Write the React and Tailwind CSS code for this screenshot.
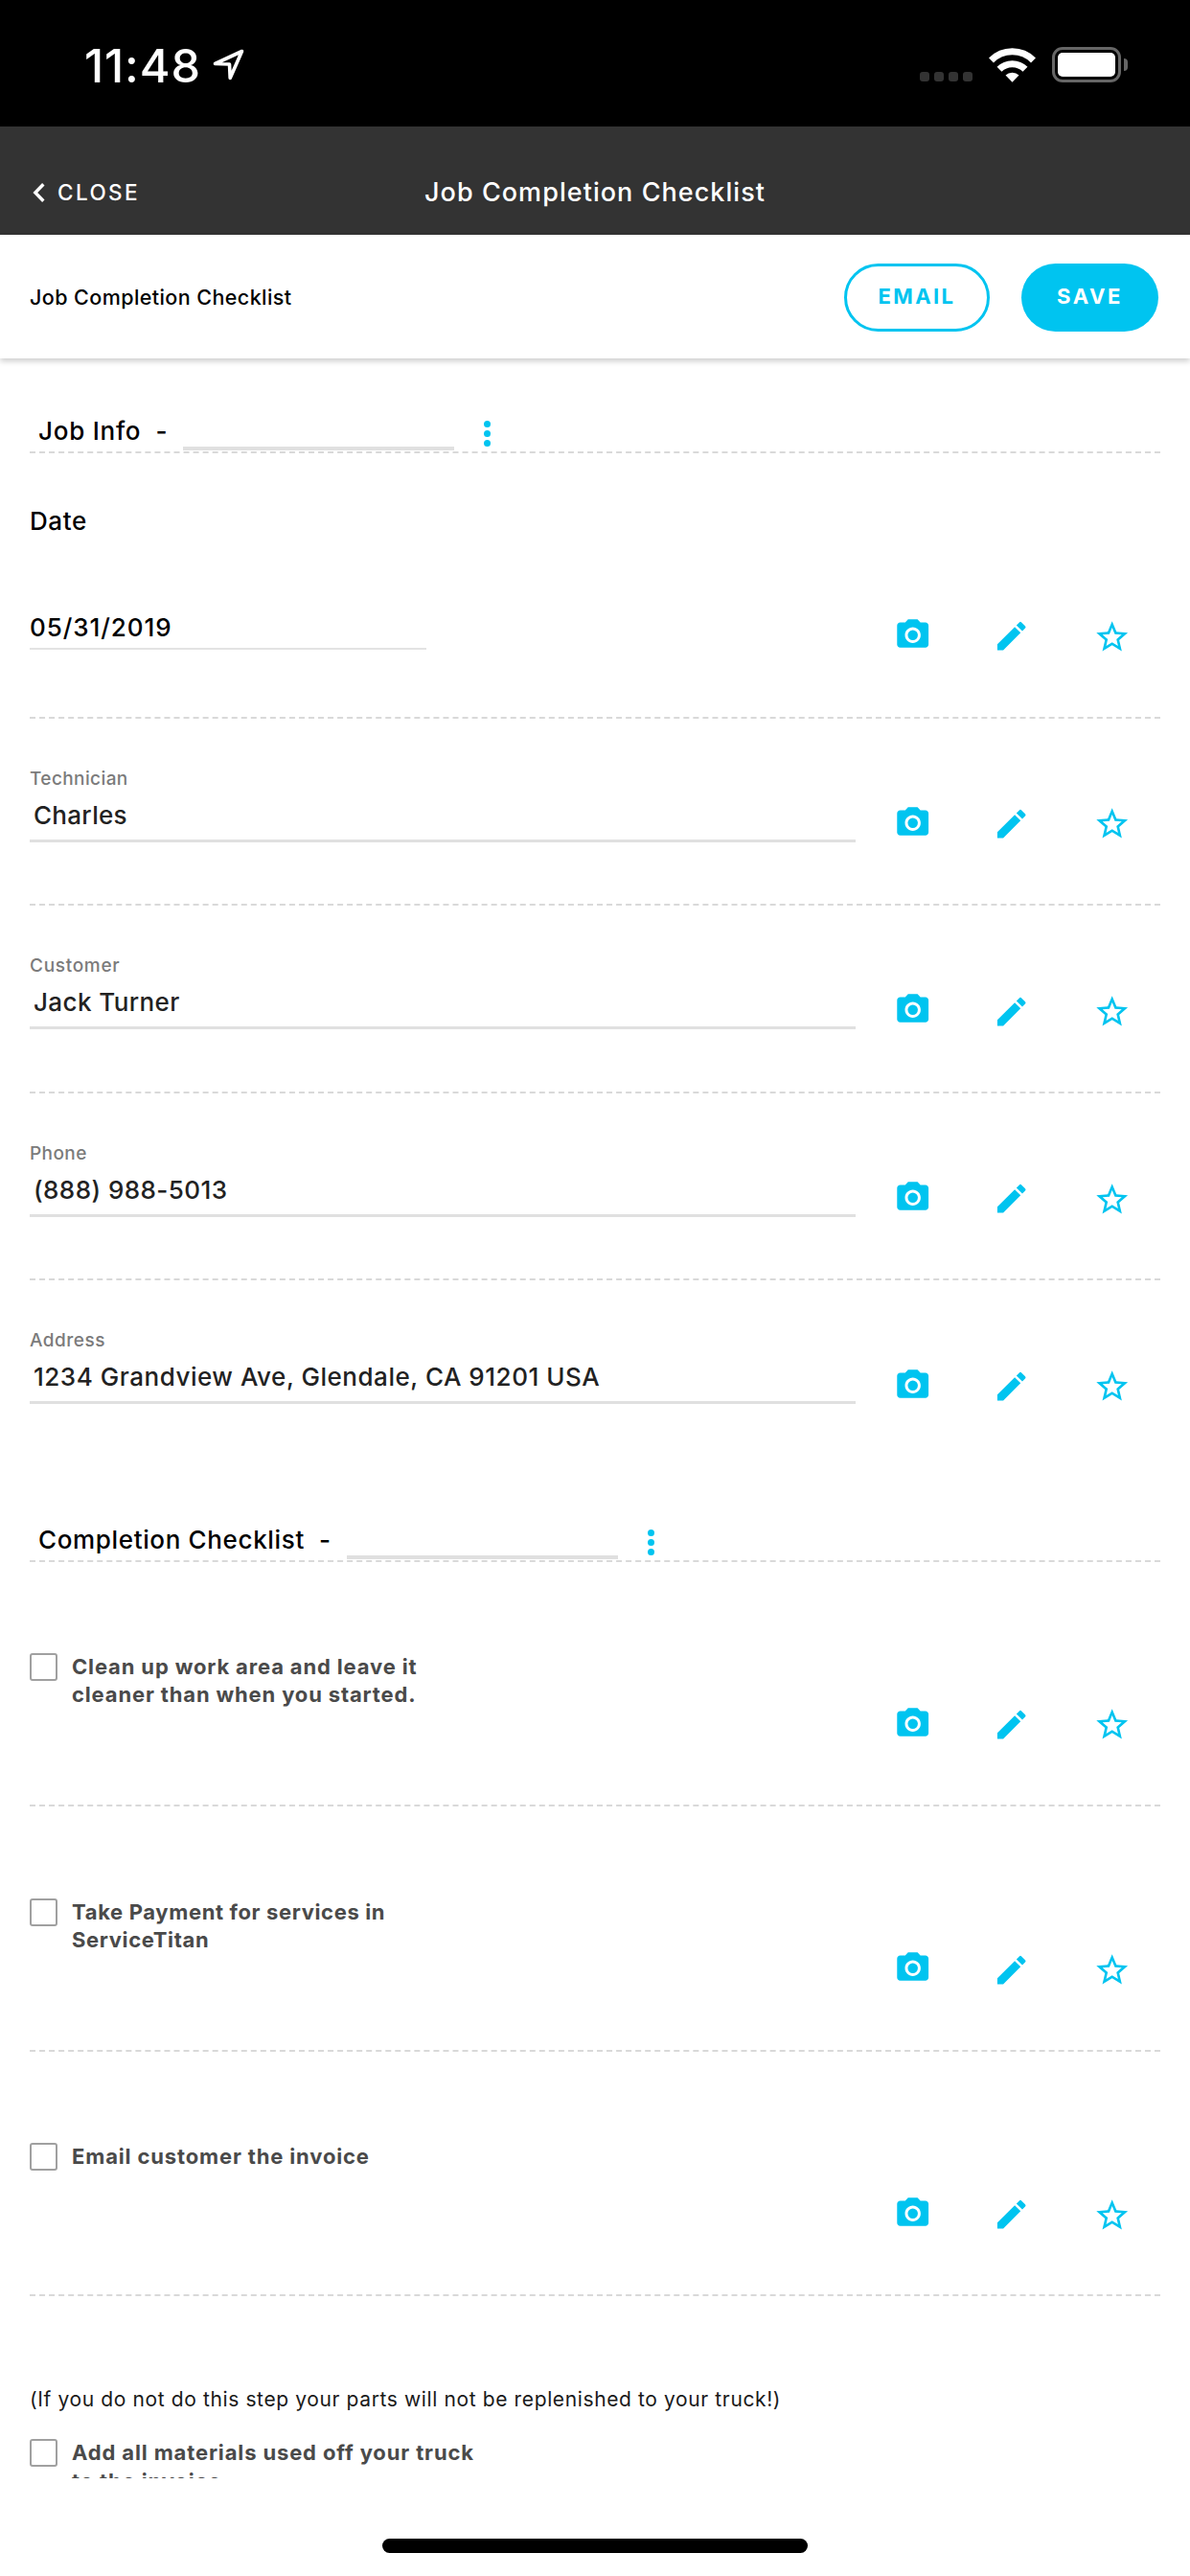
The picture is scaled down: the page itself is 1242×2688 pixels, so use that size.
import React, { useState } from 'react';
import { MdCameraAlt, MdEdit, MdStarBorder } from 'react-icons/md';

const fields = [
    { label: 'Technician', value: 'Charles', labelCls: 'tracking-[0.4px]', valueCls: 'tracking-[0.3px]' },
    { label: 'Customer', value: 'Jack Turner', labelCls: 'tracking-[0.7px]', valueCls: 'tracking-[0.4px]' },
    { label: 'Phone', value: '(888) 988-5013', labelCls: 'tracking-[0.4px]', valueCls: 'tracking-[0.45px]' },
    { label: 'Address', value: '1234 Grandview Ave, Glendale, CA 91201 USA', labelCls: 'tracking-[0.5px]', valueCls: 'tracking-[0.53px]' },
];

const tasks = [
    { lines: ['Clean up work area and leave it', 'cleaner than when you started.'], cls: 'tracking-[0.85px]' },
    { lines: ['Take Payment for services in', 'ServiceTitan'], cls: 'tracking-[0.64px]' },
    { lines: ['Email customer the invoice'], cls: 'tracking-[0.85px]' },
];

const StatusBar = () => (
    <div className="h-[132px] bg-black text-white flex items-center justify-between pl-[88px] pr-[65px] pt-[3px]">
        <div className="flex items-center">
            <span className="text-[48.5px] leading-[50px] pt-[2px] font-medium tracking-[0.9px]">11:48</span>
            <svg className="w-[33px] h-[33px] ml-[12px]" viewBox="0 0 33 33" fill="none" stroke="currentColor" strokeWidth="3.6" strokeLinejoin="round">
                <path d="M30.5 2.5 L2.5 15.5 L17.5 16 L18.2 30.5 Z" />
            </svg>
        </div>
        <div className="flex items-center">
            <div className="flex gap-[5px] mr-[17px] mt-[25px]">
                {[0, 1, 2, 3].map(i => (
                    <span key={i} className="w-[10px] h-[10px] rounded-[3px] bg-[#333333]" />
                ))}
            </div>
            <svg className="w-[49px] h-[36px] mr-[17px]" viewBox="0 0 49 36" fill="none" stroke="currentColor" strokeWidth="7">
                <path d="M2.5 13 A31 31 0 0 1 46.5 13" />
                <path d="M11 22.3 A19 19 0 0 1 38 22.3" />
                <path d="M17.5 28.5 A10 10 0 0 1 31.5 28.5 L24.5 35.8 Z" fill="currentColor" stroke="none" />
            </svg>
            <div className="w-[72px] h-[37px] rounded-[11px] border-[3px] border-[#666666] p-[3px]">
                <div className="h-full rounded-[5px] bg-white" />
            </div>
            <span className="w-[4px] h-[13px] ml-[3px] rounded-r-full bg-[#666666]" />
        </div>
    </div>
);

const SectionHeader = ({ title, titleCls }) => (
    <div className="h-[97.5px] flex items-end pl-[9px] border-b-2 border-dashed border-[#d9d9d9]">
        <span className={`text-[26px] leading-[42px] font-medium whitespace-pre ${titleCls}`}>{title}</span>
        <div className="w-[283px] h-[4px] mb-px bg-[#e0e0e0]" />
        <div className="flex flex-col gap-[3px] ml-[31px] mb-[5px]">
            {[0, 1, 2].map(i => (
                <span key={i} className="w-[7px] h-[7px] rounded-full bg-[#00c4f0]" />
            ))}
        </div>
    </div>
);

const RowActions = () => (
    <div className="flex items-start self-end mb-[65px] mr-[31px] text-[39.4px] text-[#00c4f0]">
        <MdCameraAlt />
        <MdEdit className="ml-[63.6px] mt-[1.2px] -mb-[1.2px]" />
        <MdStarBorder className="ml-[65.3px] mt-[1.5px] -mb-[1.5px]" />
    </div>
);

const Checkbox = ({ checked, onClick }) => (
    <button
        onClick={onClick}
        className={`w-[29px] h-[29px] shrink-0 rounded-[3px] border-2 border-[#a0a0a0] ${checked ? 'bg-[#00c4f0]' : 'bg-white'}`}
    />
);

const App = () => {
    const [done, setDone] = useState({});
    const toggle = (i) => setDone({ ...done, [i]: !done[i] });

    return (
        <div className="w-[1242px] h-[2688px] bg-white text-black font-[Inter,sans-serif] overflow-hidden">
            <StatusBar />

            <div className="h-[113px] bg-[#333333] text-white grid grid-cols-[1fr_auto_1fr] items-center px-8 pt-[25px]">
                <button className="flex items-center gap-[13px] text-[22.5px] leading-[24px] font-medium tracking-[2.4px]">
                    <svg className="w-[13px] h-[20px] ml-[2px]" viewBox="0 0 13 20" fill="none" stroke="currentColor" strokeWidth="3.4">
                        <path d="M11.3 1.3 L2.8 10 L11.3 18.7" />
                    </svg>
                    CLOSE
                </button>
                <h1 className="text-[27px] leading-[28px] font-medium tracking-[1.05px]">Job Completion Checklist</h1>
            </div>

            <div className="h-[129px] relative flex items-center pl-[31px] pr-[33px] pt-[2px] bg-white shadow-[0_3px_6px_rgba(0,0,0,0.2)]">
                <h2 className="flex-1 text-[21.5px] font-medium tracking-[0.42px]">Job Completion Checklist</h2>
                <button className="w-[152px] h-[71px] rounded-full border-[3px] border-[#00c4f0] text-[#00c4f0] text-[22px] font-bold tracking-[2.4px] pb-[3px]">EMAIL</button>
                <button className="w-[143px] h-[71px] ml-[33px] rounded-full bg-[#00c4f0] text-white text-[22px] font-bold tracking-[2.6px] pb-[3px]">SAVE</button>
            </div>

            <div className="h-[2212px] pt-[1.5px] px-[31px] overflow-hidden">
                <SectionHeader title="Job Info  - " titleCls="tracking-[0.75px] w-[151px]" />

                <div className="h-[276.5px] flex justify-between border-b-2 border-dashed border-[#d9d9d9] text-[26px] font-medium">
                    <div className="w-[414px]">
                        <div className="mt-[51px] leading-[40px] tracking-[0.6px]">Date</div>
                        <div className="mt-[71px] h-[43px] leading-[40px] border-b-2 border-[#e3e3e3] tracking-[0.95px]">05/31/2019</div>
                    </div>
                    <RowActions />
                </div>

                {fields.map((f, i) => (
                    <div
                        key={f.label}
                        className={`h-[195.67px] flex justify-between border-b-2 border-dashed ${i < fields.length - 1 ? 'border-[#d9d9d9]' : 'border-transparent'}`}
                    >
                        <div className="w-[862px] pt-[51px]">
                            <div className={`text-[19px] leading-[24px] font-medium text-[#7b7b7b] ${f.labelCls}`}>{f.label}</div>
                            <div className={`h-[54px] pl-[4px] text-[26px] leading-[52px] font-medium text-[#222222] border-b-3 border-[#e0e0e0] ${f.valueCls}`}>{f.value}</div>
                        </div>
                        <RowActions />
                    </div>
                ))}

                <SectionHeader title="Completion Checklist  - " titleCls="tracking-[0.65px] w-[322px]" />

                {tasks.map((t, i) => (
                    <div key={i} className="h-[255.6px] flex justify-between border-b-2 border-dashed border-[#d9d9d9]">
                        <div className="flex items-start gap-[15px] pt-[95.5px]">
                            <Checkbox checked={done[i]} onClick={() => toggle(i)} />
                            <div className={`text-[22px] leading-[29.2px] font-bold text-[#4a4a4a] ${t.cls}`}>
                                {t.lines.map(l => <div key={l}>{l}</div>)}
                            </div>
                        </div>
                        <RowActions />
                    </div>
                ))}

                <p className="pt-[92px] text-[21px] leading-[32px] tracking-[0.62px] text-[#1a1a1a] whitespace-nowrap">
                    (If you do not do this step your parts will not be replenished to your truck!)
                </p>
                <div className="flex items-start gap-[15px] pt-[25px]">
                    <Checkbox checked={done.materials} onClick={() => toggle('materials')} />
                    <div className="text-[22px] leading-[29.2px] font-bold text-[#4a4a4a] tracking-[0.86px]">
                        <div>Add all materials used off your truck</div>
                        <div>to the invoice</div>
                    </div>
                </div>
            </div>

            <div className="w-[444px] h-[15px] mt-[63px] mx-auto rounded-full bg-black" />
        </div>
    );
};

export default App;
